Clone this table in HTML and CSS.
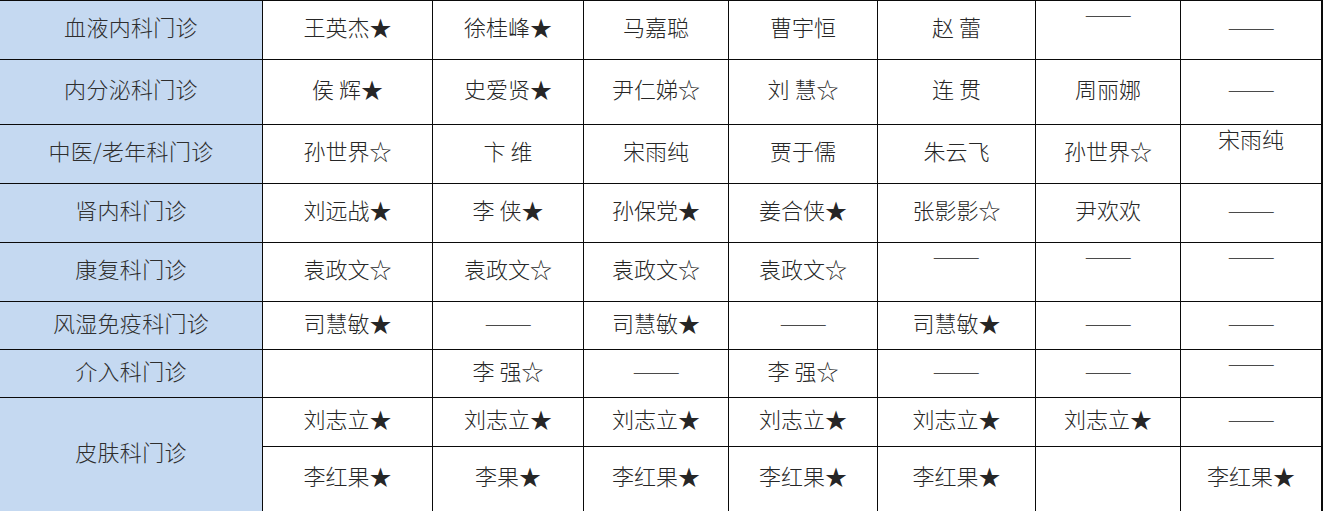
FILE: index.html
```html
<!DOCTYPE html>
<html lang="zh-CN">
<head>
<meta charset="utf-8">
<title>门诊排班表</title>
<link rel="stylesheet" href="styles.css">
</head>
<body>
<div class="sheet" role="table">
  <div class="cell dept">血液内科门诊</div>
  <div class="cell">王英杰★</div>
  <div class="cell">徐桂峰★</div>
  <div class="cell">马嘉聪</div>
  <div class="cell">曹宇恒</div>
  <div class="cell">赵 蕾</div>
  <div class="cell top"><span class="dash">——</span></div>
  <div class="cell"><span class="dash">——</span></div>

  <div class="cell dept">内分泌科门诊</div>
  <div class="cell">侯 辉★</div>
  <div class="cell">史爱贤★</div>
  <div class="cell">尹仁娣☆</div>
  <div class="cell">刘 慧☆</div>
  <div class="cell">连 贯</div>
  <div class="cell">周丽娜</div>
  <div class="cell"><span class="dash">——</span></div>

  <div class="cell dept">中医/老年科门诊</div>
  <div class="cell">孙世界☆</div>
  <div class="cell">卞 维</div>
  <div class="cell">宋雨纯</div>
  <div class="cell">贾于儒</div>
  <div class="cell">朱云飞</div>
  <div class="cell">孙世界☆</div>
  <div class="cell top">宋雨纯</div>

  <div class="cell dept">肾内科门诊</div>
  <div class="cell">刘远战★</div>
  <div class="cell">李 侠★</div>
  <div class="cell">孙保党★</div>
  <div class="cell">姜合侠★</div>
  <div class="cell">张影影☆</div>
  <div class="cell">尹欢欢</div>
  <div class="cell"><span class="dash">——</span></div>

  <div class="cell dept">康复科门诊</div>
  <div class="cell">袁政文☆</div>
  <div class="cell">袁政文☆</div>
  <div class="cell">袁政文☆</div>
  <div class="cell">袁政文☆</div>
  <div class="cell top"><span class="dash">——</span></div>
  <div class="cell top"><span class="dash">——</span></div>
  <div class="cell top"><span class="dash">——</span></div>

  <div class="cell dept">风湿免疫科门诊</div>
  <div class="cell">司慧敏★</div>
  <div class="cell"><span class="dash">——</span></div>
  <div class="cell">司慧敏★</div>
  <div class="cell"><span class="dash">——</span></div>
  <div class="cell">司慧敏★</div>
  <div class="cell"><span class="dash">——</span></div>
  <div class="cell"><span class="dash">——</span></div>

  <div class="cell dept">介入科门诊</div>
  <div class="cell"></div>
  <div class="cell">李 强☆</div>
  <div class="cell"><span class="dash">——</span></div>
  <div class="cell">李 强☆</div>
  <div class="cell"><span class="dash">——</span></div>
  <div class="cell"><span class="dash">——</span></div>
  <div class="cell top"><span class="dash">——</span></div>

  <div class="cell dept span2">皮肤科门诊</div>
  <div class="cell">刘志立★</div>
  <div class="cell">刘志立★</div>
  <div class="cell">刘志立★</div>
  <div class="cell">刘志立★</div>
  <div class="cell">刘志立★</div>
  <div class="cell">刘志立★</div>
  <div class="cell"><span class="dash">——</span></div>

  <div class="cell">李红果★</div>
  <div class="cell">李果★</div>
  <div class="cell">李红果★</div>
  <div class="cell">李红果★</div>
  <div class="cell">李红果★</div>
  <div class="cell"></div>
  <div class="cell">李红果★</div>
</div>
</body>
</html>
```
FILE: styles.css
```css
html, body {
  margin: 0;
  padding: 0;
  background: #ffffff;
  overflow: hidden;
}

.sheet {
  display: grid;
  width: 1322px;
  grid-template-columns: 262px 169px 150px 144px 148px 157px 144px 140px;
  grid-template-rows: 58px 64px 58px 58px 58px 47px 47px 48px 64px;
  gap: 1px;
  padding: 1px 1px 1px 0;
  background: #0a0a0a;
  font-family: "Noto Sans CJK SC", "Noto Sans", sans-serif;
  font-size: 22px;
  font-weight: 300;
  color: #262626;
}

.cell {
  background: #ffffff;
  display: flex;
  align-items: center;
  justify-content: center;
  line-height: 26px;
  white-space: pre;
  padding-bottom: 8px;
  box-sizing: border-box;
}

.cell.top {
  align-items: flex-start;
  padding-bottom: 0;
}

.dept {
  background: #c5d9f1;
  color: #2e2e2e;
  letter-spacing: 0.3px;
}

.span2 {
  grid-row: span 2;
}

.dash {
  display: inline-block;
  color: #4a4a4a;
  transform: scaleX(1.3);
}

.cell.top .dash {
  transform: translateY(-1px) scaleX(1.3);
}
```
